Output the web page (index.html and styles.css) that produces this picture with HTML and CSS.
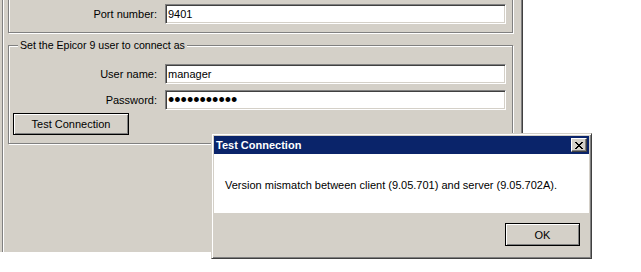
FILE: index.html
```html
<!DOCTYPE html>
<html lang="en">
<head>
    <meta charset="UTF-8">
    <title>Epicor Connection Settings</title>
    <link rel="stylesheet" href="styles.css">
</head>
<body>
    <div class="screen">
        <div class="window">
            <div class="frame">
                <div class="group group-server">
                    <div class="field">
                        <label for="port">Port number:</label>
                        <input class="edit" id="port" type="text" value="9401">
                    </div>
                </div>

                <div class="group group-user">
                    <span class="legend">Set the Epicor 9 user to connect as</span>
                    <div class="field">
                        <label for="user">User name:</label>
                        <input class="edit" id="user" type="text" value="manager">
                    </div>
                    <div class="field">
                        <label for="pass">Password:</label>
                        <input class="edit edit-pass" id="pass" type="password" value="xxxxxxxxxxx">
                    </div>
                    <button class="btn btn-default btn-test" type="button">Test Connection</button>
                </div>
            </div>
        </div>

        <div class="dialog">
            <div class="titlebar">
                <span>Test Connection</span>
                <button class="close-btn" type="button">
                    <svg width="8" height="7" viewBox="0 0 8 7" shape-rendering="crispEdges">
                        <path d="M0 0h2v1H0zM6 0h2v1H6zM1 1h2v1H1zM5 1h2v1H5zM2 2h4v1H2zM3 3h2v1H3zM2 4h4v1H2zM1 5h2v1H1zM5 5h2v1H5zM0 6h2v1H0zM6 6h2v1H6z" fill="#000"/>
                    </svg>
                </button>
            </div>
            <div class="message">Version mismatch between client (9.05.701) and server (9.05.702A).</div>
            <div class="dialog-buttons">
                <button class="btn btn-default btn-ok" type="button">OK</button>
            </div>
        </div>
    </div>
</body>
</html>
```

FILE: styles.css
```css
body {
    margin: 0;
    background-color: #fff;
    font-family: "Liberation Sans", Arial, sans-serif;
    font-size: 11px;
    color: #000;
    overflow: hidden;
}

.screen {
    position: relative;
    width: 641px;
    height: 272px;
    overflow: hidden;
}

.window {
    width: 523px;
    height: 272px;
    padding-left: 2px;
    box-sizing: border-box;
    background-color: #d4d0c8;
}

.frame {
    height: 100%;
    box-sizing: border-box;
    padding: 0 9px 0 5px;
    border-left: 1px solid #808080;
    border-right: 1px solid #404040;
    box-shadow: inset 1px 0 #fff, inset -1px 0 #808080;
}

/* etched group box */
.group {
    position: relative;
    border: 1px solid #808080;
    box-shadow: 1px 1px 0 #fff, inset 1px 1px 0 #fff;
    padding: 0 6px 0 4px;
}

.group-server {
    margin-top: -20px;
    padding-top: 23px;
    padding-bottom: 8px;
}

.group-user {
    margin-top: 12px;
    padding-top: 18px;
    padding-bottom: 8px;
    display: flex;
    flex-direction: column;
    align-items: flex-start;
    gap: 6px;
}

.legend {
    position: absolute;
    top: -7px;
    left: 9px;
    padding: 0 2px;
    line-height: 13px;
    font-size: 10.6px;
    background-color: #d4d0c8;
}

.field {
    display: grid;
    grid-template-columns: 144px 341px;
    column-gap: 8px;
    align-items: center;
}

.field label {
    text-align: right;
}

.edit {
    height: 20px;
    box-sizing: border-box;
    margin: 0;
    padding: 0 2px;
    border: 1px solid;
    border-color: #808080 #fff #fff #808080;
    box-shadow: inset 1px 1px #404040, inset -1px -1px #d4d0c8;
    background-color: #fff;
    font-family: "Liberation Sans", Arial, sans-serif;
    font-size: 11px;
    color: #000;
    outline: none;
}

.edit-pass {
    font-size: 18px;
    line-height: 16px;
}

.btn {
    margin: 0;
    padding: 0;
    background-color: #d4d0c8;
    border: 1px solid #404040;
    box-shadow: inset 1px 1px #fff, inset -1px -1px #808080;
    font-family: "Liberation Sans", Arial, sans-serif;
    font-size: 11px;
    color: #000;
}

.btn-default {
    border-color: #000;
}

.btn-test {
    width: 116px;
    height: 22px;
    margin-top: -3px;
}

.dialog {
    position: absolute;
    left: 211px;
    top: 133px;
    width: 381px;
    height: 126px;
    box-sizing: border-box;
    padding: 2px;
    display: flex;
    flex-direction: column;
    background-color: #d4d0c8;
    border: 1px solid;
    border-color: #d4d0c8 #404040 #404040 #d4d0c8;
    box-shadow: inset 1px 1px #fff, inset -1px -1px #808080;
}

.titlebar {
    height: 18px;
    display: flex;
    align-items: center;
    justify-content: space-between;
    padding: 0 2px;
    background-color: #0a246a;
    color: #fff;
    font-weight: bold;
}

.close-btn {
    width: 16px;
    height: 14px;
    padding: 0;
    display: flex;
    align-items: center;
    justify-content: center;
    background-color: #d4d0c8;
    border: 1px solid;
    border-color: #fff #404040 #404040 #fff;
    box-shadow: inset -1px -1px #808080;
}

.message {
    height: 59px;
    display: flex;
    align-items: center;
    padding-left: 11px;
    padding-top: 3px;
    box-sizing: border-box;
    background-color: #fff;
}

.dialog-buttons {
    display: flex;
    justify-content: flex-end;
    padding: 10px 9px 0 0;
}

.btn-ok {
    width: 75px;
    height: 23px;
}
```
